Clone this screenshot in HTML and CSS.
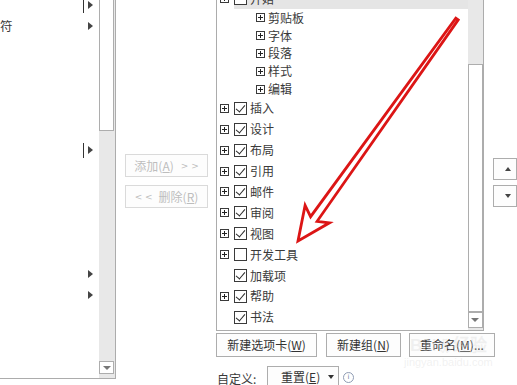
FILE: index.html
```html
<!DOCTYPE html>
<html lang="zh-CN">
<head>
<meta charset="utf-8">
<title>自定义功能区</title>
<link rel="stylesheet" href="styles.css">
</head>
<body>
<div class="page">
  <div class="left-list">
    <div class="left-content">
      <div class="lrow"><span class="caret"></span><span class="tri"></span></div>
      <div class="lrow"><span class="ltext">符</span><span class="tri"></span></div>
      <div class="lrow"></div>
      <div class="lrow"></div>
      <div class="lrow"></div>
      <div class="lrow"></div>
      <div class="lrow"></div>
      <div class="lrow"><span class="caret"></span><span class="tri"></span></div>
      <div class="lrow"></div>
      <div class="lrow"></div>
      <div class="lrow"></div>
      <div class="lrow"></div>
      <div class="lrow"></div>
      <div class="lrow"><span class="tri"></span></div>
      <div class="lrow"><span class="tri"></span></div>
    </div>
    <div class="vscroll left-scroll">
      <div class="thumb left-thumb"></div>
      <div class="track-fill"></div>
      <div class="sbtn"><span class="dn"></span></div>
      <div class="tail"></div>
    </div>
  </div>

  <div class="mid">
    <div class="btn dis">添加(<u>A</u>)<span class="gt gt-r">&gt; &gt;</span></div>
    <div class="btn dis"><span class="gt gt-l">&lt; &lt;</span>删除(<u>R</u>)</div>
  </div>

  <div class="right">
    <div class="right-top">
      <div class="tree">
        <div class="tree-content">
          <div class="trow top"><span class="plus"></span><span class="item sel"><span class="cb"></span><span class="lbl">开始</span></span></div>
          <div class="trow sub"><span class="plus"></span><span class="lbl">剪贴板</span></div>
          <div class="trow sub"><span class="plus"></span><span class="lbl">字体</span></div>
          <div class="trow sub"><span class="plus"></span><span class="lbl">段落</span></div>
          <div class="trow sub"><span class="plus"></span><span class="lbl">样式</span></div>
          <div class="trow sub"><span class="plus"></span><span class="lbl">编辑</span></div>
          <div class="trow top"><span class="plus"></span><span class="item"><span class="cb on"></span><span class="lbl">插入</span></span></div>
          <div class="trow top"><span class="plus"></span><span class="item"><span class="cb on"></span><span class="lbl">设计</span></span></div>
          <div class="trow top"><span class="plus"></span><span class="item"><span class="cb on"></span><span class="lbl">布局</span></span></div>
          <div class="trow top"><span class="plus"></span><span class="item"><span class="cb on"></span><span class="lbl">引用</span></span></div>
          <div class="trow top"><span class="plus"></span><span class="item"><span class="cb on"></span><span class="lbl">邮件</span></span></div>
          <div class="trow top"><span class="plus"></span><span class="item"><span class="cb on"></span><span class="lbl">审阅</span></span></div>
          <div class="trow top"><span class="plus"></span><span class="item"><span class="cb on"></span><span class="lbl">视图</span></span></div>
          <div class="trow top"><span class="plus"></span><span class="item"><span class="cb"></span><span class="lbl">开发工具</span></span></div>
          <div class="trow top"><span class="noplus"></span><span class="item"><span class="cb on"></span><span class="lbl">加载项</span></span></div>
          <div class="trow top"><span class="plus"></span><span class="item"><span class="cb on"></span><span class="lbl">帮助</span></span></div>
          <div class="trow top"><span class="noplus"></span><span class="item"><span class="cb on"></span><span class="lbl">书法</span></span></div>
        </div>
        <div class="vscroll tree-scroll">
          <div class="track-top"></div>
          <div class="thumb tree-thumb"></div>
          <div class="sbtn"><span class="dn"></span></div>
          <div class="tail"></div>
        </div>
      </div>
      <div class="updown">
        <div class="ud-btn"><span class="up-g"></span></div>
        <div class="ud-btn"><span class="dn-g"></span></div>
      </div>
    </div>

    <div class="btn-row">
      <div class="btn b1">新建选项卡(<u>W</u>)</div>
      <div class="btn b2">新建组(<u>N</u>)</div>
      <div class="btn b3">重命名(<u>M</u>)...</div>
    </div>

    <div class="custom-row">
      <span class="clabel">自定义:</span>
      <div class="dropdown">重置(<u>E</u>)<span class="dd-arrow"></span></div>
      <span class="info">i</span>
    </div>
  </div>

  <div class="watermark">
    <span class="wm-logo">Bai<span class="paw">❀</span>经验</span>
    <span class="wm-url">jingyan.baidu.com</span>
  </div>

  <svg class="red-arrow" width="517" height="385" viewBox="0 0 517 385">
    <polygon points="458.2,19.9 317.1,221.3 329.5,222.8 298,241 305.1,205.4 310.6,216.7 455.8,18.1"
      fill="none" stroke="#dc1515" stroke-width="2.8" stroke-linejoin="miter"/>
  </svg>
</div>
</body>
</html>
```

FILE: styles.css
```css
* { box-sizing: border-box; }

html, body {
  margin: 0;
  padding: 0;
}

body {
  width: 517px;
  height: 385px;
  overflow: hidden;
  background: #ffffff;
  font-family: "Noto Sans CJK SC", "Microsoft YaHei", sans-serif;
  font-size: 12px;
  line-height: 14px;
  color: #3c3c3c;
}

u { text-decoration: underline; text-underline-offset: 1px; }

.page {
  position: relative;
  display: grid;
  grid-template-columns: 116px 100px 301px;
  width: 517px;
  height: 385px;
  overflow: hidden;
}

/* ---------- left list ---------- */
.left-list {
  display: flex;
  height: 379px;
  border-right: 1px solid #acacac;
  border-bottom: 1px solid #acacac;
  overflow: hidden;
}

.left-content {
  width: 99px;
  margin-top: -5.35px;
  display: flex;
  flex-direction: column;
}

.lrow {
  position: relative;
  height: 20.7px;
  flex: none;
  display: flex;
  align-items: center;
}

.ltext {
  margin-left: 0;
  color: #3a3a3a;
  font-size: 12.5px;
}

.tri {
  position: absolute;
  left: 88px;
  top: 50%;
  margin-top: -4px;
  width: 0;
  height: 0;
  border-left: 5px solid #444;
  border-top: 4px solid transparent;
  border-bottom: 4px solid transparent;
}

.caret {
  position: absolute;
  left: 83px;
  top: 50%;
  margin-top: -7px;
  width: 1px;
  height: 15px;
  background: #333;
}

.vscroll {
  display: flex;
  flex-direction: column;
  background: #e8e8e8;
}

.left-scroll {
  width: 16px;
}

.thumb {
  flex: none;
  width: 15px;
  background: #fff;
  border: 1px solid #adadad;
}

.left-thumb {
  height: 131px;
  border-top: none;
}

.track-fill { flex: 1; }

.sbtn {
  flex: none;
  width: 15px;
  height: 13px;
  background: #fff;
  border: 1px solid #adadad;
  display: flex;
  align-items: center;
  justify-content: center;
}

.dn {
  width: 0;
  height: 0;
  border-top: 4px solid #777;
  border-left: 4px solid transparent;
  border-right: 4px solid transparent;
}

.left-scroll .tail { height: 4px; flex: none; }

/* ---------- middle buttons ---------- */
.mid {
  display: flex;
  flex-direction: column;
  gap: 8px;
  padding-top: 154px;
  padding-left: 9px;
}

.btn {
  display: flex;
  align-items: center;
  justify-content: center;
  height: 24px;
  border: 1px solid #adadad;
  background: #fdfdfd;
  color: #333;
  white-space: nowrap;
}

.btn.dis {
  width: 83px;
  height: 23px;
  border-color: #dadada;
  color: #bdbdbd;
}

.gt {
  font-family: "DejaVu Sans", sans-serif;
  font-size: 9px;
  white-space: pre;
}

.gt-r { margin-left: 7px; }
.gt-l { margin-right: 6px; }

/* ---------- right ---------- */
.right {
  display: flex;
  flex-direction: column;
}

.right-top {
  display: flex;
  height: 331px;
}

.tree {
  display: flex;
  width: 278px;
  height: 331px;
  border-left: 1px solid #acacac;
  border-right: 1px solid #acacac;
  border-bottom: 1px solid #acacac;
  overflow: hidden;
}

.tree-content {
  width: 260px;
  margin-top: -11.9px;
  display: flex;
  flex-direction: column;
}

.trow {
  flex: none;
  display: flex;
  align-items: center;
}

.trow.top { height: 20.9px; padding-left: 3px; }
.trow.sub { height: 17.8px; padding-left: 39px; }

.plus, .noplus {
  position: relative;
  flex: none;
  width: 9px;
  height: 9px;
}

.plus {
  border: 1px solid #3a3a3a;
  background: #fff;
}

.plus::before {
  content: "";
  position: absolute;
  left: 1px;
  top: 3px;
  width: 5px;
  height: 1px;
  background: #222;
}

.plus::after {
  content: "";
  position: absolute;
  left: 3px;
  top: 1px;
  width: 1px;
  height: 5px;
  background: #222;
}

.trow.sub .plus { margin-right: 3px; }

.item {
  flex: 1;
  display: flex;
  align-items: center;
  align-self: stretch;
  margin-left: 5px;
}

.item.sel { background: #e5e5e5; }

.cb {
  position: relative;
  flex: none;
  width: 13px;
  height: 13px;
  border: 1px solid #3a3a3a;
  background: #fff;
}

.cb.on::after {
  content: "";
  position: absolute;
  left: 3px;
  top: 0px;
  width: 4px;
  height: 8px;
  border-right: 1.3px solid #2a2a2a;
  border-bottom: 1.3px solid #2a2a2a;
  transform: rotate(40deg);
  transform-origin: center;
}

.item .lbl { margin-left: 3px; }

.lbl {
  color: #3a3a3a;
  white-space: nowrap;
}

.tree-scroll {
  width: 16px;
}

.track-top { height: 64px; flex: none; }

.tree-thumb { height: 248px; }

.tree-scroll .sbtn { height: 16px; }

.tree-scroll .tail { flex: 1; }

.updown {
  display: flex;
  flex-direction: column;
  gap: 5px;
  margin-left: 9px;
  padding-top: 158px;
}

.ud-btn {
  width: 24px;
  height: 22px;
  border: 1px solid #adadad;
  background: #fdfdfd;
  position: relative;
}

.up-g, .dn-g {
  position: absolute;
  left: 11px;
  top: 8px;
  width: 0;
  height: 0;
  border-left: 3px solid transparent;
  border-right: 3px solid transparent;
}

.up-g { border-bottom: 4px solid #444; }
.dn-g { border-top: 4px solid #444; }

.btn-row {
  display: flex;
  margin-top: 2px;
}

.b1 { width: 101px; }
.b2 { width: 75px; margin-left: 9px; }
.b3 { width: 86px; margin-left: 8px; }

.custom-row {
  display: flex;
  align-items: flex-start;
  margin-top: 9px;
  padding-left: 1px;
}

.clabel {
  margin-top: 6px;
  color: #3a3a3a;
  width: 50px;
}

.dropdown {
  display: flex;
  align-items: center;
  width: 72px;
  height: 22px;
  border: 1px solid #adadad;
  background: #fdfdfd;
  padding-left: 13px;
  color: #333;
}

.dd-arrow {
  margin-left: 8px;
  width: 0;
  height: 0;
  border-top: 4px solid #333;
  border-left: 3.5px solid transparent;
  border-right: 3.5px solid transparent;
}

.info {
  margin-left: 4px;
  margin-top: 6px;
  width: 11px;
  height: 11px;
  border: 1px solid #8f9cb3;
  border-radius: 50%;
  color: #6b7f9e;
  font-family: "DejaVu Sans", sans-serif;
  font-size: 7px;
  line-height: 9px;
  text-align: center;
}

/* ---------- overlays ---------- */
.watermark {
  position: absolute;
  left: 404px;
  top: 336px;
  display: flex;
  flex-direction: column;
  align-items: center;
  color: rgba(215, 215, 215, 0.35);
  pointer-events: none;
}

.wm-logo {
  font-family: "Liberation Sans", sans-serif;
  font-size: 17px;
  font-weight: bold;
  line-height: 20px;
}

.paw { font-size: 14px; margin: 0 1px; }

.wm-url {
  font-family: "Liberation Sans", sans-serif;
  font-size: 11px;
  line-height: 12px;
}

.red-arrow {
  position: absolute;
  left: 0;
  top: 0;
  pointer-events: none;
}
```
